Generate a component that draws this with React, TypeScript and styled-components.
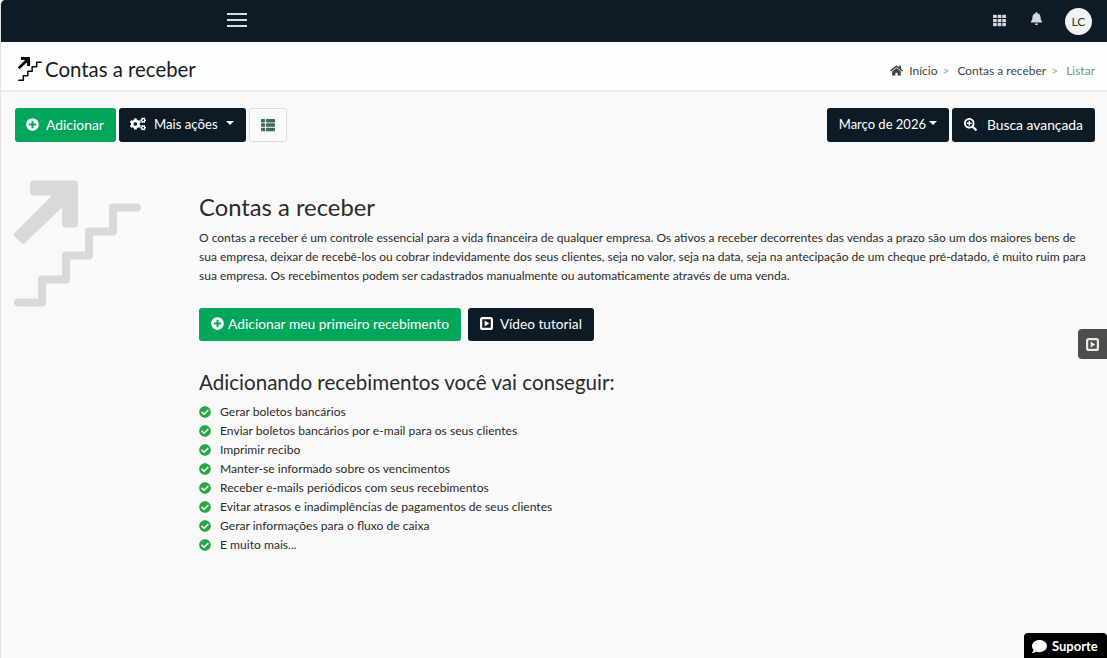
import React from "react";
import styled, { createGlobalStyle } from "styled-components";
import {
  FaBell,
  FaCheckCircle,
  FaCogs,
  FaComment,
  FaHome,
  FaPlusCircle,
  FaSearchPlus,
  FaTh,
  FaThList,
} from "react-icons/fa";

const navy = "#0d1b27";
const green = "#00a65a";

const benefits = [
  "Gerar boletos bancários",
  "Enviar boletos bancários por e-mail para os seus clientes",
  "Imprimir recibo",
  "Manter-se informado sobre os vencimentos",
  "Receber e-mails periódicos com seus recebimentos",
  "Evitar atrasos e inadimplências de pagamentos de seus clientes",
  "Gerar informações para o fluxo de caixa",
  "E muito mais...",
];

function StairsIcon({ size, color }: { size: number; color: string }) {
  return (
    <svg width={size} height={size} viewBox="0 0 127 126" fill="none">
      <path
        d="M4 122H28V99H52V75H75V51H99V27H123"
        stroke={color}
        strokeWidth="8"
        strokeLinecap="round"
        strokeLinejoin="round"
      />
      <polygon
        points="19,3 61,3 61,44 51,44 51,20 9,60 3,54 45,12 19,12"
        fill={color}
        stroke={color}
        strokeWidth="6"
        strokeLinejoin="round"
      />
    </svg>
  );
}

function PlaySquareIcon({ size }: { size: number }) {
  return (
    <svg width={size} height={size} viewBox="0 0 14 14" fill="none">
      <rect x="1.2" y="1.2" width="11.6" height="11.6" rx="1.6" stroke="currentColor" strokeWidth="2.4" />
      <path d="M5 3.8L10 7L5 10.2Z" fill="currentColor" />
    </svg>
  );
}

export default function App() {
  return (
    <>
      <GlobalStyle />
      <Page>
        <Navbar>
          <Burger>
            <span />
            <span />
            <span />
          </Burger>
          <NavRight>
            <NavIcon>
              <FaTh size={13} />
            </NavIcon>
            <NavIcon>
              <FaBell size={13} />
            </NavIcon>
            <Avatar>LC</Avatar>
          </NavRight>
        </Navbar>

        <TitleBar>
          <PageTitle>
            <StairsIcon size={24} color="#0b0b0b" />
            Contas a receber
          </PageTitle>
          <Breadcrumb>
            <FaHome size={13} />
            <Crumb $home>Início</Crumb>
            <Separator>&gt;</Separator>
            <Crumb>Contas a receber</Crumb>
            <Separator>&gt;</Separator>
            <CurrentCrumb>Listar</CurrentCrumb>
          </Breadcrumb>
        </TitleBar>

        <Toolbar>
          <ToolGroup>
            <Button $variant="green" $size={13.9} $gap={7} $padLeft={11}>
              <FaPlusCircle size={13} />
              Adicionar
            </Button>
            <Button $variant="navy" $size={13.2} $padLeft={11}>
              <FaCogs size={16} />
              Mais ações
              <Caret />
            </Button>
            <ViewButton>
              <FaThList size={14} />
            </ViewButton>
          </ToolGroup>
          <ToolGroup>
            <Button $variant="navy" $size={13} $gap={3}>
              Março de 2026
              <Caret />
            </Button>
            <Button $variant="navy" $size={13.85} $gap={10}>
              <FaSearchPlus size={13} />
              Busca avançada
            </Button>
          </ToolGroup>
        </Toolbar>

        <Hero>
          <HeroIcon>
            <StairsIcon size={127} color="#d9d9d9" />
          </HeroIcon>
          <HeroBody>
            <HeroTitle>Contas a receber</HeroTitle>
            <HeroText>
              O contas a receber é um controle essencial para a vida financeira de qualquer empresa. Os ativos a
              receber decorrentes das vendas a prazo são um dos maiores bens de sua empresa, deixar de recebê-los ou
              cobrar indevidamente dos seus clientes, seja no valor, seja na data, seja na antecipação de um cheque
              pré-datado, é muito ruim para sua empresa. Os recebimentos podem ser cadastrados manualmente ou
              automaticamente através de uma venda.
            </HeroText>
            <HeroActions>
              <Button $variant="green" $size={13.83} $gap={4}>
                <FaPlusCircle size={13} />
                Adicionar meu primeiro recebimento
              </Button>
              <Button $variant="navy" $gap={7}>
                <PlaySquareIcon size={13} />
                Vídeo tutorial
              </Button>
            </HeroActions>
            <Subtitle>Adicionando recebimentos você vai conseguir:</Subtitle>
            <BenefitList>
              {benefits.map((item) => (
                <Benefit key={item}>
                  <FaCheckCircle size={12} />
                  {item}
                </Benefit>
              ))}
            </BenefitList>
          </HeroBody>
        </Hero>

        <VideoTab>
          <PlaySquareIcon size={13} />
        </VideoTab>
        <SupportTab>
          <FaComment size={15} />
          Suporte
        </SupportTab>
      </Page>
    </>
  );
}

const GlobalStyle = createGlobalStyle`
  html, body {
    margin: 0;
    height: 100%;
    overflow: hidden;
    background: #fff;
  }
  * {
    box-sizing: border-box;
  }
  body {
    font-family: "Lato", "Noto Sans", sans-serif;
    font-size: 13px;
    color: #2b2b2b;
  }
`;

const Page = styled.div`
  position: relative;
  height: 658px;
  background: #f9f9f9;
  border-left: 1px solid #e2e2e2;
  border-top-left-radius: 5px;
  overflow: hidden;
`;

const Navbar = styled.header`
  height: 42px;
  background: ${navy};
  display: flex;
  align-items: center;
  justify-content: space-between;
  padding: 0 15px 0 226px;
`;

const Burger = styled.div`
  width: 20px;
  margin-top: -2px;
  display: flex;
  flex-direction: column;
  gap: 4px;

  span {
    height: 2px;
    background: #d8dadb;
  }
`;

const NavRight = styled.div`
  display: flex;
  align-items: center;
`;

const NavIcon = styled.span`
  display: flex;
  color: #d4d6d8;
  margin-right: 24px;
  margin-top: -2px;

  &:nth-child(2) {
    margin-right: 22px;
    margin-top: -5px;
  }
`;

const Avatar = styled.div`
  width: 27px;
  height: 27px;
  border-radius: 50%;
  background: #f2f2f2;
  color: #333;
  font-size: 12px;
  display: flex;
  align-items: center;
  justify-content: center;
`;

const TitleBar = styled.div`
  height: 50px;
  background: #fcfdfd;
  border-bottom: 2px solid #ececec;
  display: flex;
  align-items: center;
  justify-content: space-between;
  padding: 5px 12px 0 17px;
`;

const PageTitle = styled.h1`
  margin: 0;
  display: flex;
  align-items: center;
  gap: 3px;
  font-size: 20.4px;
  font-weight: 400;
  color: #1c1c1c;
`;

const Breadcrumb = styled.nav`
  display: flex;
  align-items: center;
  padding-top: 3px;
  font-size: 12px;
  color: #444;
`;

const Crumb = styled.span<{ $home?: boolean }>`
  margin-left: ${(p) => (p.$home ? "6px" : "0")};
`;

const Separator = styled.span`
  color: #aaa;
  margin: 0 8px 0 5px;
`;

const CurrentCrumb = styled.span`
  color: #7c9170;
`;

const Toolbar = styled.div`
  display: flex;
  justify-content: space-between;
  padding: 16px 12px 0 14px;
`;

const ToolGroup = styled.div`
  display: flex;
  gap: 3px;
`;

const Button = styled.button<{ $variant: "green" | "navy"; $size?: number; $gap?: number; $padLeft?: number }>`
  height: 34px;
  padding: 0 12px 2px ${(p) => p.$padLeft ?? 12}px;
  display: inline-flex;
  align-items: center;
  gap: ${(p) => p.$gap ?? 8}px;
  border: 0;
  border-radius: 3px;
  font-family: inherit;
  font-size: ${(p) => p.$size ?? 13.7}px;
  font-weight: 400;
  color: #fff;
  background: ${(p) => (p.$variant === "green" ? green : navy)};
`;

const Caret = styled.span`
  width: 0;
  height: 0;
  margin-top: -2px;
  border-left: 4px solid transparent;
  border-right: 4px solid transparent;
  border-top: 4px solid #fff;
`;

const ViewButton = styled.button`
  width: 38px;
  height: 34px;
  padding: 0;
  display: flex;
  align-items: center;
  justify-content: center;
  background: #fafafa;
  border: 1px solid #dcdcdc;
  border-radius: 3px;
  color: #3f6d55;
`;

const Hero = styled.main`
  display: flex;
  padding: 38px 12px 0 13px;
`;

const HeroIcon = styled.div`
  width: 185px;
  flex: none;
`;

const HeroBody = styled.div`
  flex: 1;
`;

const HeroTitle = styled.h2`
  margin: 13px 0 7px;
  font-size: 23.8px;
  line-height: 28px;
  font-weight: 400;
  color: #2b2b2b;
`;

const HeroText = styled.p`
  margin: 0;
  font-size: 12px;
  line-height: 19px;
  color: #2b2b2b;
`;

const HeroActions = styled.div`
  display: flex;
  gap: 7px;
  margin-top: 23px;

  ${Button} {
    height: 33px;
  }
`;

const Subtitle = styled.h3`
  margin: 28px 0 7px;
  font-size: 20.6px;
  line-height: 26px;
  font-weight: 400;
  color: #2b2b2b;
`;

const BenefitList = styled.ul`
  list-style: none;
  margin: 0;
  padding: 0;
`;

const Benefit = styled.li`
  height: 19px;
  display: flex;
  align-items: center;
  gap: 9px;
  font-size: 12.1px;

  svg {
    color: #28a745;
  }
`;

const VideoTab = styled.div`
  position: absolute;
  right: 0;
  top: 329px;
  width: 29px;
  height: 30px;
  background: #4d4d4d;
  border-radius: 4px 0 0 4px;
  color: #e8ece0;
  display: flex;
  align-items: center;
  justify-content: center;
`;

const SupportTab = styled.div`
  position: absolute;
  right: 0;
  bottom: 0;
  width: 83px;
  height: 25px;
  padding: 1px 0 0 8px;
  background: #000;
  border-radius: 4px 4px 0 0;
  color: #fff;
  font-size: 13px;
  font-weight: 700;
  display: flex;
  align-items: center;
  gap: 5px;
`;
